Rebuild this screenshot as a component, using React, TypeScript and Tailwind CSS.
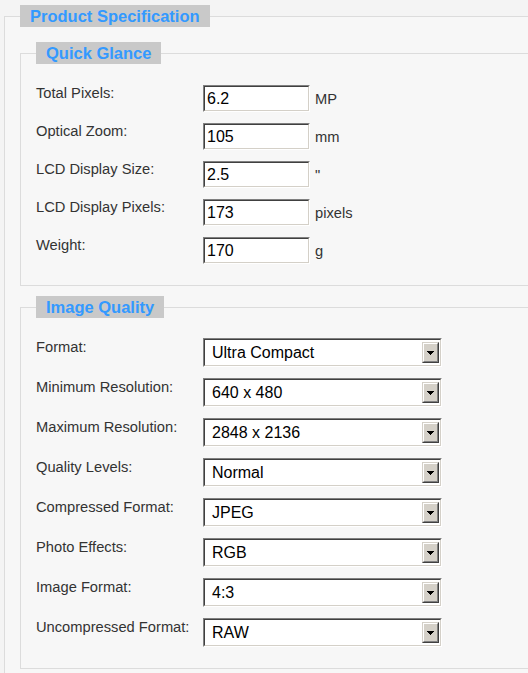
import React from 'react'

const quickGlance = [
  { label: 'Total Pixels:', value: '6.2', unit: 'MP' },
  { label: 'Optical Zoom:', value: '105', unit: 'mm' },
  { label: 'LCD Display Size:', value: '2.5', unit: '"' },
  { label: 'LCD Display Pixels:', value: '173', unit: 'pixels' },
  { label: 'Weight:', value: '170', unit: 'g' },
]

const imageQuality = [
  { label: 'Format:', value: 'Ultra Compact' },
  { label: 'Minimum Resolution:', value: '640 x 480' },
  { label: 'Maximum Resolution:', value: '2848 x 2136' },
  { label: 'Quality Levels:', value: 'Normal' },
  { label: 'Compressed Format:', value: 'JPEG' },
  { label: 'Photo Effects:', value: 'RGB' },
  { label: 'Image Format:', value: '4:3' },
  { label: 'Uncompressed Format:', value: 'RAW' },
]

function Legend({ children }: { children: React.ReactNode }) {
  return (
    <legend className="h-[22px] bg-[#c9c9c9] px-[10px] text-[16.5px] font-bold leading-[22px] text-[#3399ff]">
      {children}
    </legend>
  )
}

function TextBox({ value }: { value: string }) {
  return (
    <div className="border border-t-[#808080] border-l-[#808080] border-b-white border-r-white">
      <div className="flex h-[25px] w-[105px] items-center border border-t-[#404040] border-l-[#404040] border-b-[#d4d0c8] border-r-[#d4d0c8] bg-white pl-[2px] text-[16px] text-black">
        {value}
      </div>
    </div>
  )
}

function DropArrow() {
  return (
    <div className="border border-t-[#d4d0c8] border-l-[#d4d0c8] border-b-[#404040] border-r-[#404040]">
      <div className="flex h-[19px] w-[15px] items-center justify-center border border-t-white border-l-white border-b-[#808080] border-r-[#808080] bg-[#d4d0c8]">
        <svg width="7" height="4" viewBox="0 0 7 4" shapeRendering="crispEdges" className="mt-[1px]">
          <rect x="0" y="0" width="7" height="1" fill="#000" />
          <rect x="1" y="1" width="5" height="1" fill="#000" />
          <rect x="2" y="2" width="3" height="1" fill="#000" />
          <rect x="3" y="3" width="1" height="1" fill="#000" />
        </svg>
      </div>
    </div>
  )
}

function SelectBox({ value }: { value: string }) {
  return (
    <div className="border border-t-[#808080] border-l-[#808080] border-b-white border-r-white">
      <div className="flex h-[27px] w-[237px] items-center justify-between border border-t-[#404040] border-l-[#404040] border-b-[#d4d0c8] border-r-[#d4d0c8] bg-white pl-[7px] pr-[1px] text-[16px] text-black">
        <span>{value}</span>
        <DropArrow />
      </div>
    </div>
  )
}

export default function App() {
  return (
    <div
      className="h-screen w-full overflow-hidden bg-[#f4f4f4] pt-[5px] pl-[4px] text-[#333]"
      style={{ fontFamily: '"Liberation Sans", Arial, sans-serif' }}
    >
      <fieldset className="w-[600px] border border-[#dcdcdc] bg-[#f7f7f7] px-[15px] pt-[15px] pb-[20px]">
        <Legend>Product Specification</Legend>

        <fieldset className="border border-[#dcdcdc] px-[15px] pt-[21px] pb-[21px]">
          <Legend>Quick Glance</Legend>
          <div className="flex flex-col gap-[11px]">
            {quickGlance.map((row) => (
              <div key={row.label} className="flex items-start">
                <div className="w-[167px] shrink-0 text-[14.7px] leading-[16px]">{row.label}</div>
                <div className="flex items-center gap-[5px]">
                  <TextBox value={row.value} />
                  <span className="text-[14.7px] leading-[16px]">{row.unit}</span>
                </div>
              </div>
            ))}
          </div>
        </fieldset>

        <fieldset className="mt-[10px] border border-[#dcdcdc] px-[15px] pt-[20px] pb-[21px]">
          <Legend>Image Quality</Legend>
          <div className="flex flex-col gap-[11px]">
            {imageQuality.map((row) => (
              <div key={row.label} className="flex items-start">
                <div className="w-[167px] shrink-0 pt-[1px] text-[14.7px] leading-[16px]">{row.label}</div>
                <SelectBox value={row.value} />
              </div>
            ))}
          </div>
        </fieldset>
      </fieldset>
    </div>
  )
}
